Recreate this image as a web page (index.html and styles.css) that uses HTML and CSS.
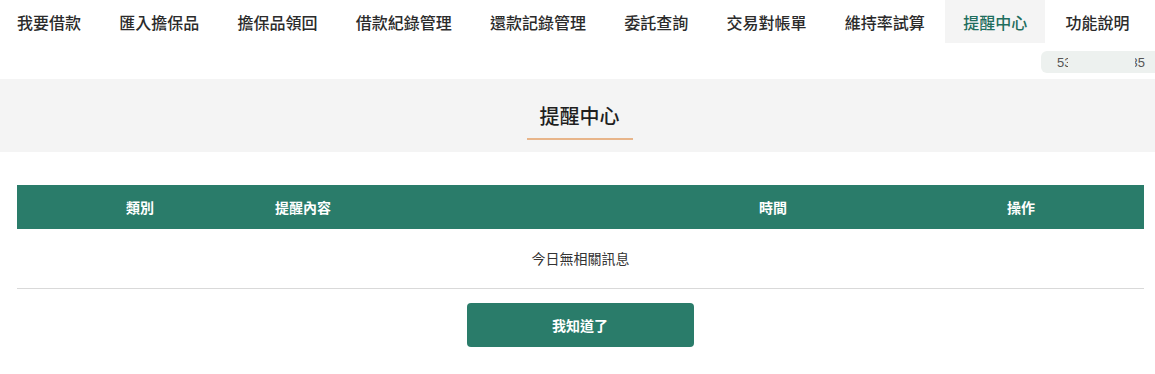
FILE: index.html
```html
<!DOCTYPE html>
<html lang="zh-Hant">
<head>
    <meta charset="UTF-8">
    <meta name="viewport" content="width=device-width, initial-scale=1.0">
    <title>提醒中心</title>
    <link rel="stylesheet" href="styles.css">
</head>
<body>
    <nav class="top-nav">
        <a class="nav-item">我要借款</a>
        <a class="nav-item">匯入擔保品</a>
        <a class="nav-item">擔保品領回</a>
        <a class="nav-item">借款紀錄管理</a>
        <a class="nav-item">還款記錄管理</a>
        <a class="nav-item">委託查詢</a>
        <a class="nav-item">交易對帳單</a>
        <a class="nav-item">維持率試算</a>
        <a class="nav-item active">提醒中心</a>
        <a class="nav-item">功能說明</a>
    </nav>

    <div class="account-row">
        <div class="account-pill">
            <span class="acc-head">53</span>
            <span class="acc-mask"></span>
            <span class="acc-tail"><span>35</span></span>
        </div>
    </div>

    <div class="page-title">
        <h2>提醒中心</h2>
    </div>

    <div class="notice-table">
        <div class="table-head">
            <div class="col col-type">類別</div>
            <div class="col col-content">提醒內容</div>
            <div class="col col-time">時間</div>
            <div class="col col-action">操作</div>
        </div>
        <div class="table-empty">今日無相關訊息</div>
    </div>

    <div class="btn-row">
        <button class="confirm-btn">我知道了</button>
    </div>
</body>
</html>
```

FILE: styles.css
```css
body {
    font-family: "Noto Sans CJK TC", "Noto Sans", Arial, sans-serif;
    margin: 0;
    padding: 0;
    background-color: #fff;
    color: #333;
    overflow: hidden;
}

.top-nav {
    display: flex;
    gap: 2.25px;
    height: 43px;
    margin-left: -1px;
}

.nav-item {
    display: flex;
    align-items: center;
    padding: 0 18px;
    font-size: 16px;
    font-weight: 500;
    color: #2b2b2b;
    white-space: nowrap;
    cursor: pointer;
}

.nav-item.active {
    background-color: #f4f4f4;
    color: #1f6e5e;
}

.account-row {
    display: flex;
    justify-content: flex-end;
    height: 36px;
    padding-top: 8px;
    box-sizing: border-box;
    overflow: hidden;
}

.account-pill {
    display: flex;
    align-items: center;
    height: 22px;
    width: 126px;
    margin-right: -12px;
    padding-left: 16px;
    box-sizing: border-box;
    background-color: #edf1ef;
    border-radius: 6px;
    font-family: "Liberation Sans", Arial, sans-serif;
    font-size: 13px;
    color: #555;
}

.acc-head {
    width: 11px;
    overflow: hidden;
    white-space: nowrap;
}

.acc-mask {
    width: 67px;
}

.acc-tail {
    display: flex;
    justify-content: flex-end;
    width: 10px;
    overflow: hidden;
    white-space: nowrap;
}

.page-title {
    background-color: #f4f4f4;
    padding: 23px 0 12px 4px;
    text-align: center;
}

.page-title h2 {
    display: inline-block;
    margin: 0;
    padding: 0 13px 8px;
    font-size: 20px;
    font-weight: 500;
    line-height: 28px;
    color: #1f1f1f;
    border-bottom: 2px solid #e8b58a;
}

.notice-table {
    margin: 33px 11px 0 17px;
}

.table-head {
    display: grid;
    grid-template-columns: 246px 385px 250px 1fr;
    height: 44px;
    align-items: center;
    background-color: #2a7c6a;
    color: #fff;
    font-size: 14px;
    font-weight: 700;
}

.col {
    text-align: center;
}

.col-content {
    text-align: left;
    padding-left: 12px;
}

.table-empty {
    height: 59px;
    line-height: 59px;
    text-align: center;
    font-size: 14px;
    color: #333;
    border-bottom: 1px solid #d9d9d9;
}

.btn-row {
    display: flex;
    justify-content: center;
    padding-top: 14px;
    padding-left: 5px;
}

.confirm-btn {
    width: 227px;
    height: 44px;
    border: none;
    border-radius: 4px;
    background-color: #2a7c6a;
    color: #fff;
    font-family: inherit;
    font-size: 14px;
    font-weight: 700;
    cursor: pointer;
}
```
